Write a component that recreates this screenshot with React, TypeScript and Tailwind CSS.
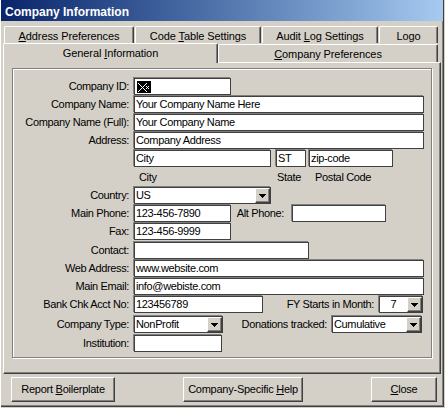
import * as React from "react";

// ── Small building blocks ────────────────────────────────────────────────────

function Field({ w, value, children }: { w: string; value?: string; children?: React.ReactNode }) {
  return (
    <div
      className={`${w} h-[17px] shrink-0 bg-white border border-[#404040] shadow-[-1px_-1px_0_#808080] flex items-center pl-[1px] overflow-hidden whitespace-nowrap`}
    >
      {children ?? value}
    </div>
  );
}

function Select({ w, value, center }: { w: string; value: string; center?: boolean }) {
  return (
    <div
      className={`${w} h-[17px] shrink-0 bg-white border border-[#404040] shadow-[-1px_-1px_0_#808080] flex items-stretch overflow-hidden whitespace-nowrap`}
    >
      <span className={`flex-1 flex items-center ${center ? "justify-center" : "pl-[1px]"}`}>{value}</span>
      <span className="w-[15px] bg-[#d4d0c8] border-t border-l border-white border-r border-b border-r-[#404040] border-b-[#404040] shadow-[inset_-1px_-1px_0_#808080] flex items-center justify-center">
        <svg width="7" height="4" viewBox="0 0 7 4" shapeRendering="crispEdges">
          <path d="M0 0h7v1h-1v1h-1v1h-1v1h-1v-1h-1v-1h-1v-1h-1z" fill="#000" />
        </svg>
      </span>
    </div>
  );
}

function Label({ children }: { children: React.ReactNode }) {
  return <span className="w-[116px] mr-[5px] shrink-0 text-right whitespace-nowrap">{children}</span>;
}

function Row({ mt, children }: { mt: string; children: React.ReactNode }) {
  return <div className={`flex items-center h-[17px] ${mt}`}>{children}</div>;
}

function Tab({ w, children }: { w: string; children: React.ReactNode }) {
  return (
    <div
      className={`${w} h-[17px] shrink-0 rounded-t-[2px] border-t border-l border-white border-r border-r-[#404040] shadow-[inset_-1px_0_0_#808080] flex items-center justify-center pt-[3px]`}
    >
      {children}
    </div>
  );
}

function Button({ w, children }: { w: string; children: React.ReactNode }) {
  return (
    <div
      className={`${w} h-[25px] border-t border-l border-white border-r border-b border-r-[#404040] border-b-[#404040] shadow-[inset_-1px_-1px_0_#808080] flex items-center justify-center`}
    >
      {children}
    </div>
  );
}

function IdGlyph() {
  return (
    <svg width="14" height="12" viewBox="0 0 14 12" shapeRendering="crispEdges" className="ml-[1px]">
      <rect width="14" height="12" fill="#000" />
      <path
        d="M1 2h1v1h1v1h1v1h1v1h1v-1h1v-1h1v-1h1v-1h1v1h-1v1h-1v1h-1v1h-1v1h1v1h1v1h1v1h1v1h-1v-1h-1v-1h-1v-1h-1v-1h-1v1h-1v1h-1v1h-1v1h-1v-1h1v-1h1v-1h1v-1h1v-1h-1v-1h-1v-1h-1v-1h-1z"
        fill="#fff"
      />
      <path d="M9 5h1v1h1v-1h1v1h-1v1h1v1h-1v-1h-1v1h-1v-1h1v-1h-1z" fill="#fff" />
    </svg>
  );
}

// ── App ──────────────────────────────────────────────────────────────────────

export default function App() {
  return (
    <div className="w-[445px] h-[408px] bg-[#d4d0c8] text-black text-[11px] leading-none font-['Liberation_Sans',Arial,sans-serif] overflow-hidden border-l border-white">
      <div className="w-[443px] h-[407px] border-r border-b border-[#404040] shadow-[inset_-1px_-1px_0_#808080]">
        {/* Title bar */}
        <div className="h-[21px] -ml-px bg-gradient-to-r from-[#0a246a] to-[#a6caf0] flex items-center pl-[5px] pt-[2px] text-white font-bold text-[12px]">
          Company Information
        </div>

        {/* Tabs — back row */}
        <div className="flex gap-px pl-[3px] mt-[5px] tracking-[-0.1px]">
          <Tab w="w-[130px]">
            <span>
              <u>A</u>ddress Preferences
            </span>
          </Tab>
          <Tab w="w-[126px]">
            <span>
              Code <u>T</u>able Settings
            </span>
          </Tab>
          <Tab w="w-[116px]">
            <span>
              Audit <u>L</u>og Settings
            </span>
          </Tab>
          <Tab w="w-[59px]">
            <span>
              Lo<u>g</u>o
            </span>
          </Tab>
        </div>

        {/* Tabs — front row */}
        <div className="flex pl-[2px] h-[19px] tracking-[-0.1px]">
          <div className="relative z-10 w-[215px] h-[20px] bg-[#d4d0c8] rounded-t-[2px] border-t border-l border-white border-r border-r-[#404040] shadow-[inset_-1px_0_0_#808080] flex items-center justify-center">
            <span>
              General <u>I</u>nformation
            </span>
          </div>
          <div className="w-[220px] h-[18px] mt-px rounded-t-[2px] border-t border-l border-white border-r border-r-[#404040] shadow-[inset_-1px_0_0_#808080] flex items-center justify-center pt-[2px]">
            <span>
              <u>C</u>ompany Preferences
            </span>
          </div>
        </div>

        {/* Tab panel */}
        <div className="ml-[2px] w-[438px] h-[312px] border-t border-l border-white border-r border-b border-r-[#404040] border-b-[#404040] shadow-[inset_-1px_-1px_0_#808080] pt-[5px] pl-[8px] tracking-[-0.35px]">
          <div className="w-[420px] h-[290px] border border-[#808080] shadow-[inset_1px_1px_0_#fff,1px_1px_0_#fff] pt-[9px]">
            <Row mt="mt-0">
              <Label>Company ID:</Label>
              <Field w="w-[97px]">
                <IdGlyph />
              </Field>
            </Row>
            <Row mt="mt-px">
              <Label>Company Name:</Label>
              <Field w="w-[290px]" value="Your Company Name Here" />
            </Row>
            <Row mt="mt-px">
              <Label>Company Name (Full):</Label>
              <Field w="w-[290px]" value="Your Company Name" />
            </Row>
            <Row mt="mt-px">
              <Label>Address:</Label>
              <Field w="w-[290px]" value="Company Address" />
            </Row>
            <Row mt="mt-px">
              <Label>{""}</Label>
              <Field w="w-[137px]" value="City" />
              <span className="ml-[5px]" />
              <Field w="w-[30px]" value="ST" />
              <span className="ml-[3px]" />
              <Field w="w-[84px]" value="zip-code" />
            </Row>
            <div className="flex items-center h-[20px]">
              <span className="w-[121px] shrink-0" />
              <span className="w-[137px] pl-[5px]">City</span>
              <span className="w-[38px] pl-[6px]">State</span>
              <span className="pl-[6px]">Postal Code</span>
            </div>
            <Row mt="mt-0">
              <Label>Country:</Label>
              <Select w="w-[137px]" value="US" />
            </Row>
            <Row mt="mt-px">
              <Label>Main Phone:</Label>
              <Field w="w-[97px]" value="123-456-7890" />
              <span className="w-[61px] pr-[8px] text-right whitespace-nowrap">Alt Phone:</span>
              <Field w="w-[94px]" />
            </Row>
            <Row mt="mt-px">
              <Label>Fax:</Label>
              <Field w="w-[97px]" value="123-456-9999" />
            </Row>
            <Row mt="mt-[2px]">
              <Label>Contact:</Label>
              <Field w="w-[175px]" />
            </Row>
            <Row mt="mt-px">
              <Label>Web Address:</Label>
              <Field w="w-[290px]" value="www.website.com" />
            </Row>
            <Row mt="mt-px">
              <Label>Main Email:</Label>
              <Field w="w-[290px]" value="info@webiste.com" />
            </Row>
            <Row mt="mt-px">
              <Label>Bank Chk Acct No:</Label>
              <Field w="w-[129px]" value="123456789" />
              <span className="w-[116px] pr-[5px] text-right whitespace-nowrap">FY Starts in Month:</span>
              <Select w="w-[44px]" value="7" center />
            </Row>
            <Row mt="mt-[3px]">
              <Label>Company Type:</Label>
              <Select w="w-[89px]" value="NonProfit" />
              <span className="w-[109px] pr-[5px] text-right whitespace-nowrap">Donations tracked:</span>
              <Select w="w-[90px]" value="Cumulative" />
            </Row>
            <Row mt="mt-[2px]">
              <Label>Institution:</Label>
              <Field w="w-[88px]" />
            </Row>
          </div>
        </div>

        {/* Buttons */}
        <div className="flex justify-between pl-[10px] pr-[6px] mt-[3px] tracking-[-0.25px]">
          <Button w="w-[104px]">
            <span>
              Report <u>B</u>oilerplate
            </span>
          </Button>
          <Button w="w-[120px]">
            <span>
              Company-Specific <u>H</u>elp
            </span>
          </Button>
          <Button w="w-[66px]">
            <span>
              <u>C</u>lose
            </span>
          </Button>
        </div>
      </div>
    </div>
  );
}
